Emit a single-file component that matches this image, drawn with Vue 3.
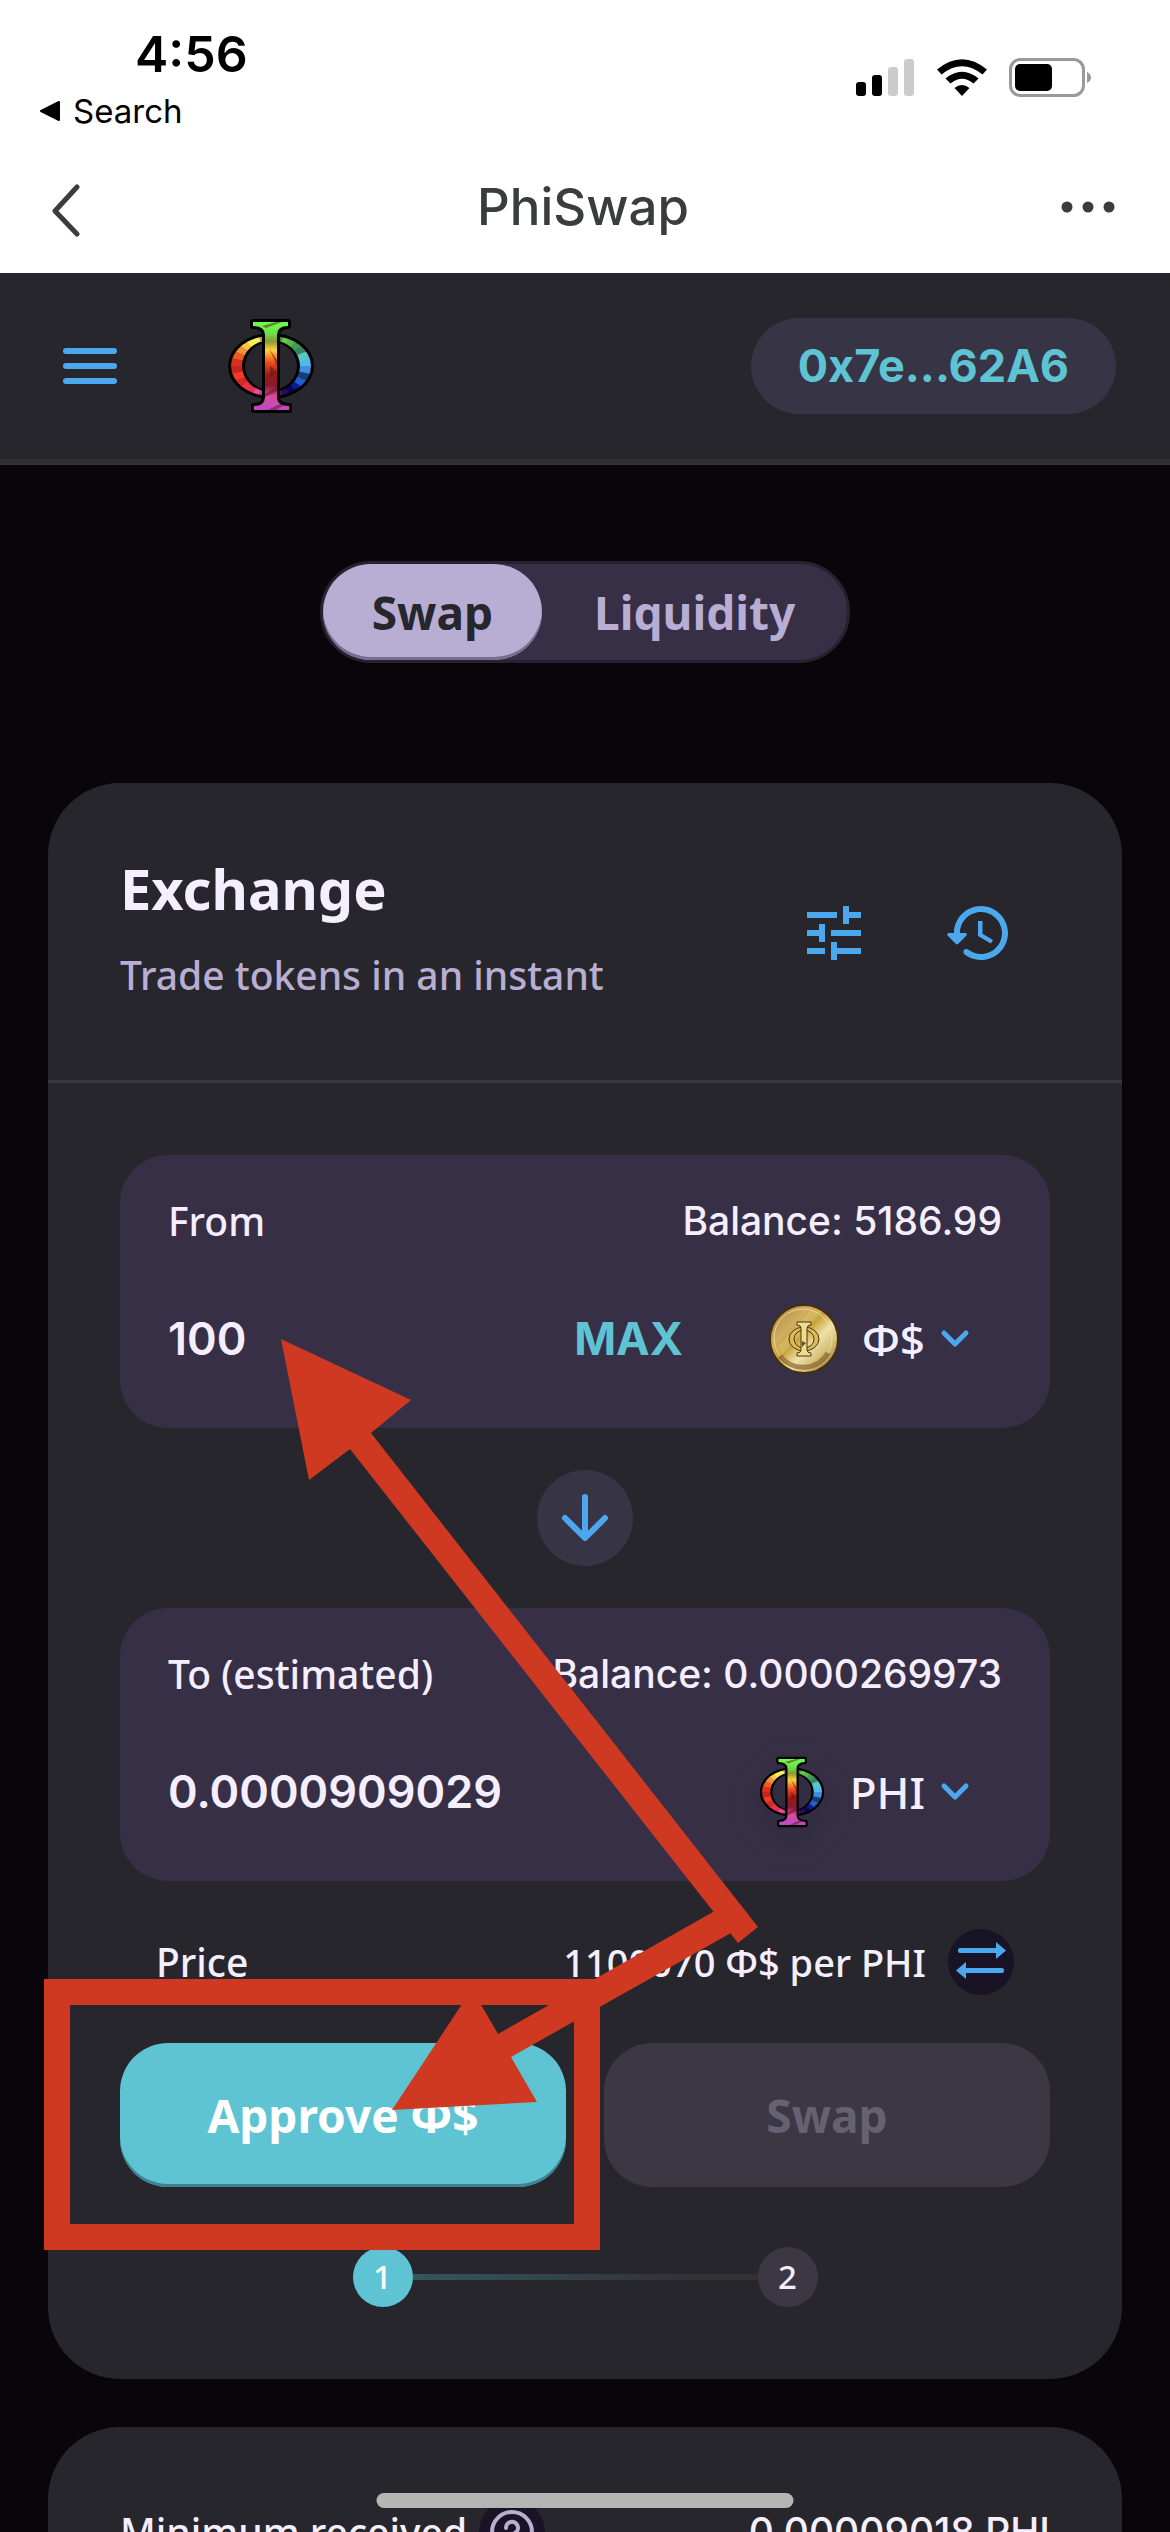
<script setup>
import { ref } from 'vue'

const fromAmount = ref('100')
const toAmount = ref('0.0000909029')

// Rainbow wedges of the Phi ring, clockwise from the top
const ringColors = [
  '#5fb83a', '#3f8f2c', '#6cc94a', '#58b846', '#3c9f54', '#3c7f64', '#58c9c0', '#54b8e8',
  '#3f8fe0', '#163f78', '#1f5fd0', '#0c1c8c', '#07075a', '#2a0a5a', '#4a0f7a', '#8a2a9a',
  '#e65ad0', '#c23a7a', '#f04a9a', '#e0305a', '#f03040', '#d02a2a', '#f23a26', '#c4261e',
  '#d8301e', '#ee5a26', '#f0903a', '#f8c840', '#fff04a', '#f8f060', '#b8963a', '#f0f04a',
]
const step = (Math.PI * 2) / ringColors.length
const wedges = ringColors.map((color, i) => {
  const at = (a) => `${Math.round(43 + 70 * Math.sin(a))},${Math.round(48 - 70 * Math.cos(a))}`
  return { color, points: `43,48 ${at(i * step)} ${at((i + 1) * step + 0.03)}` }
})
</script>

<template>
  <div class="page">
    <svg class="defs" width="0" height="0" aria-hidden="true">
      <defs>
        <linearGradient id="stem" x1="0" y1="0" x2="0" y2="1">
          <stop offset="0" stop-color="#6cff4a" />
          <stop offset="0.13" stop-color="#6ee04a" />
          <stop offset="0.22" stop-color="#8a9a30" />
          <stop offset="0.32" stop-color="#ffd23a" />
          <stop offset="0.46" stop-color="#f04a22" />
          <stop offset="0.6" stop-color="#9a1a16" />
          <stop offset="0.72" stop-color="#8a1830" />
          <stop offset="0.85" stop-color="#dc4aa0" />
          <stop offset="1" stop-color="#b84ac8" />
        </linearGradient>
        <linearGradient id="gold" x1="0" y1="0" x2="1" y2="1">
          <stop offset="0" stop-color="#a87a32" />
          <stop offset="0.3" stop-color="#cfae62" />
          <stop offset="0.46" stop-color="#c8a43c" />
          <stop offset="0.6" stop-color="#f0e2a8" />
          <stop offset="0.75" stop-color="#d4bc74" />
          <stop offset="1" stop-color="#7a5426" />
        </linearGradient>
        <clipPath id="ring">
          <path clip-rule="evenodd" d="M3 48a40 30 0 1 0 80 0a40 30 0 1 0-80 0zM14 48a29 26 0 1 1 58 0a29 26 0 1 1-58 0z" />
        </clipPath>
        <symbol id="phi" viewBox="0 0 86 96">
          <path fill="#000" fill-rule="evenodd" d="M0 48a43 33 0 1 0 86 0a43 33 0 1 0-86 0zM17 48a26 24 0 1 1 52 0a26 24 0 1 1-52 0z" />
          <g clip-path="url(#ring)">
            <polygon v-for="(w, i) in wedges" :key="i" :points="w.points" :fill="w.color" />
          </g>
          <path id="stem-shape" fill="url(#stem)" stroke="#000" stroke-width="6" stroke-linejoin="round" paint-order="stroke"
            d="M25 4H60V8Q49 8 49 17V79Q49 88 61 88V92H26V88Q37 88 37 79V17Q37 8 25 8Z" />
          <path fill="#5a1414" opacity="0.5" d="M41 30l8 12v6zM42 48l7 6-7 6zM37 76l12-8v5l-12 6zM40 92l12-6h6l-10 6zM34 8l14-4h6l-16 6z" />
        </symbol>
      </defs>
    </svg>

    <header class="system">
      <div class="status">
        <div class="clock">
          <span class="time">4:56</span>
          <a class="return" href="#">
            <svg width="22" height="22" viewBox="0 0 22 22"><path d="M2 11 20 2V20Z" stroke="#000" stroke-width="2" stroke-linejoin="round" /></svg>
            Search
          </a>
        </div>
        <svg class="gauges" width="236" height="40" viewBox="0 0 236 40" aria-label="Signal, Wi-Fi and battery">
          <rect x="0" y="24" width="10" height="14" rx="3" />
          <rect x="16" y="17" width="10" height="21" rx="3" />
          <g fill="#cbcbcb">
            <rect x="32" y="9" width="10" height="29" rx="3" />
            <rect x="48" y="1" width="10" height="37" rx="3" />
          </g>
          <path d="M81 11.5Q106-9 131 11.5L126.500 16.500Q106 0 85.500 16.500Z" />
          <path d="M89.500 20.500Q106 7 122.500 20.500L117.500 25.500Q106 16 94.500 25.500Z" />
          <path d="M98.500 30Q106 24 113.500 30L106 38Z" />
          <rect x="154.500" y="1.500" width="73" height="36" rx="10" fill="none" stroke="#999" stroke-width="3" />
          <rect x="159" y="6" width="37" height="27" rx="5" />
          <path fill="#999" d="M231 14Q235 16 235 19.500T231 25Z" />
        </svg>
      </div>
      <div class="titlebar">
        <button class="plain" aria-label="Back">
          <svg width="32" height="60" viewBox="0 0 32 60"><path d="M27 10 5 34 27 57" fill="none" stroke="#3b3c3e" stroke-width="5" stroke-linecap="round" stroke-linejoin="round" /></svg>
        </button>
        <h1>PhiSwap</h1>
        <button class="plain" aria-label="More">
          <svg width="56" height="12" viewBox="0 0 56 12" fill="#3b3c3e"><circle cx="7" cy="6" r="5.500" /><circle cx="28" cy="6" r="5.500" /><circle cx="49" cy="6" r="5.500" /></svg>
        </button>
      </div>
    </header>

    <nav class="appbar">
      <button class="plain" aria-label="Menu">
        <svg width="54" height="36" viewBox="0 0 54 36" fill="#4ca8ee"><rect width="54" height="6" rx="3" /><rect y="15" width="54" height="6" rx="3" /><rect y="30" width="54" height="6" rx="3" /></svg>
      </button>
      <a class="brand" href="#" aria-label="Home"><svg width="86" height="96"><use href="#phi" /></svg></a>
      <button class="account">0x7e...62A6</button>
    </nav>

    <main>
      <div class="tabs">
        <button class="tab active">Swap</button>
        <button class="tab">Liquidity</button>
      </div>

      <section class="card">
        <div class="card-head">
          <div>
            <h2>Exchange</h2>
            <p>Trade tokens in an instant</p>
          </div>
          <div class="tools">
            <button class="plain tool" aria-label="Settings">
              <svg width="72" height="72" viewBox="0 0 24 24" fill="#4ca8ee"><path d="M3 17v2h6v-2H3zM3 5v2h10V5H3zm10 16v-2h8v-2h-8v-2h-2v6h2zM7 9v2H3v2h4v2h2V9H7zm14 4v-2H11v2h10zm-6-4h2V7h4V5h-4V3h-2v6z" /></svg>
            </button>
            <button class="plain tool" aria-label="History">
              <svg width="72" height="72" viewBox="0 0 24 24" fill="#4ca8ee"><path d="M13.260 3C8.170 2.860 4 6.950 4 12H2.210c-.45 0-.67.54-.35.85l2.790 2.800c.2.2.51.2.71 0l2.790-2.800c.31-.31.09-.85-.36-.85H6c0-3.900 3.180-7.050 7.100-7 3.720.05 6.850 3.180 6.900 6.900.05 3.910-3.100 7.100-7 7.100-1.610 0-3.100-.55-4.280-1.480-.4-.31-.96-.28-1.320.08-.42.42-.39 1.130.08 1.490C9 20.290 10.910 21 13 21c5.050 0 9.140-4.170 9-9.260-.13-4.690-4.050-8.610-8.740-8.740zM12 8v5l4.280 2.540.72-1.210-3.500-2.080V8z" /></svg>
            </button>
          </div>
        </div>

        <div class="card-body">
          <div class="panel">
            <div class="row">
              <label for="from">From</label>
              <span class="figure">Balance: 5186.99</span>
            </div>
            <div class="row entry">
              <input id="from" v-model="fromAmount" inputmode="decimal" />
              <button class="plain max">MAX</button>
              <button class="plain token">
                <svg width="72" height="72" viewBox="0 0 72 72">
                  <circle cx="36" cy="36" r="34" fill="url(#gold)" stroke="#44300f" stroke-width="2" />
                  <circle cx="35" cy="35" r="29" fill="none" stroke="#f4e0a0" stroke-width="1" opacity="0.8" />
                  <path d="M12 53A29 29 0 0 0 60 50" fill="none" stroke="#7a5220" stroke-width="5" opacity="0.6" />
                  <path d="M10 44 42 8H54L14 52Z" fill="#f0dc98" opacity="0.25" />
                  <g fill="#d9bb58" stroke="#4a3510" stroke-width="1">
                    <path fill-rule="evenodd" d="M21 36a15 12 0 1 0 30 0a15 12 0 1 0-30 0zM26 36a10 9 0 1 1 20 0a10 9 0 1 1-20 0z" />
                    <path fill="#f0dc90" d="M29 19H43V22Q39 22 39 25V47Q39 50 43 50V53H29V50Q33 50 33 47V25Q33 22 29 22Z" />
                  </g>
                  <path d="M34 38l4 2-4 4z" fill="#6a5020" />
                </svg>
                <span class="symbol">Φ$</span>
                <svg width="30" height="20" viewBox="0 0 30 20"><path d="M4 4 15 15 26 4" fill="none" stroke="#4ca8ee" stroke-width="5" stroke-linecap="round" stroke-linejoin="round" /></svg>
              </button>
            </div>
          </div>

          <button class="flip" aria-label="Switch tokens">
            <svg width="48" height="50" viewBox="0 0 48 50" fill="none" stroke="#4ca8ee" stroke-width="6" stroke-linecap="round" stroke-linejoin="round"><path d="M24 4V44M4 25 24 45 44 25" /></svg>
          </button>

          <div class="panel">
            <div class="row">
              <label for="to">To (estimated)</label>
              <span class="figure">Balance: 0.0000269973</span>
            </div>
            <div class="row entry">
              <input id="to" v-model="toAmount" inputmode="decimal" />
              <button class="plain token">
                <svg class="shade" width="72" height="72"><use href="#phi" /></svg>
                <span class="symbol">PHI</span>
                <svg width="30" height="20" viewBox="0 0 30 20"><path d="M4 4 15 15 26 4" fill="none" stroke="#4ca8ee" stroke-width="5" stroke-linecap="round" stroke-linejoin="round" /></svg>
              </button>
            </div>
          </div>

          <div class="row price">
            <span>Price</span>
            <div class="rate">
              <span class="quote">1100070 Φ$ per PHI</span>
              <button class="round" aria-label="Invert price">
                <svg width="50" height="40" viewBox="0 0 50 40" fill="#4ca8ee"><rect x="2" y="6" width="40" height="5" rx="2" /><path d="M40 0 50 8.500 40 17Z" /><rect x="8" y="26" width="40" height="5" rx="2" /><path d="M10 20 0 28.500 10 37Z" /></svg>
              </button>
            </div>
          </div>

          <div class="actions">
            <button class="approve">Approve Φ$</button>
            <button class="swap" disabled>Swap</button>
          </div>

          <div class="steps">
            <span class="dot done">1</span>
            <span class="line"></span>
            <span class="dot">2</span>
          </div>
        </div>
      </section>

      <section class="card details">
        <div class="row">
          <div class="rate min">
            <span>Minimum received</span>
            <button class="round" aria-label="Help">
              <svg width="44" height="44" viewBox="0 0 44 44" fill="none" stroke="#b8add2" stroke-width="4"><circle cx="22" cy="22" r="20" /><path d="M16 18a6 6 0 1 1 9 5q-3 2-3 5" stroke-linecap="round" /><path d="M22 33v1" stroke-linecap="round" /></svg>
            </button>
          </div>
          <span class="figure">0.00009018 PHI</span>
        </div>
      </section>
    </main>

    <svg class="notes" viewBox="0 0 1170 2532" fill="#cf3921" aria-hidden="true">
      <path d="M281 1339 411 1400 371 1433 758 1927 738 1943 350 1449 309 1480Z" />
      <path d="M392 2110 472 1989 498 2034 720 1908 738 1929 511 2057 537 2102Z" />
      <rect x="57" y="1992" width="530" height="245" fill="none" stroke="#cf3921" stroke-width="26" />
    </svg>
    <div class="home"></div>
  </div>
</template>

<style>
body {
  margin: 0;
  background: #08060b;
}
</style>

<style scoped>
.page {
  position: relative;
  height: 100vh;
  overflow: hidden;
  background: #08060b;
  color: #f4eeff;
  font: 500 39px/60px "Noto Sans", "Open Sans", sans-serif;
}
.defs {
  position: absolute;
}
svg {
  display: block;
  flex: none;
}
h1, h2, p {
  margin: 0;
}
button, input {
  font: inherit;
  color: inherit;
  border: 0;
  padding: 0;
}
.plain {
  background: none;
}
.system {
  background: #fff;
  color: #000;
  font-family: Inter, "Liberation Sans", sans-serif;
}
.status {
  display: flex;
  justify-content: space-between;
  height: 144px;
  padding: 24px 78px 0 39px;
  box-sizing: border-box;
}
.clock {
  display: flex;
  flex-direction: column;
}
.time {
  padding-left: 96px;
  font-size: 50px;
  font-weight: 600;
}
.return {
  display: flex;
  align-items: center;
  gap: 12px;
  font-size: 33px;
  line-height: 54px;
  font-weight: 400;
  color: #000;
  text-decoration: none;
}
.gauges {
  margin-top: 34px;
}
.titlebar {
  display: grid;
  grid-template-columns: 1fr auto 1fr;
  align-items: center;
  height: 129px;
  padding: 0 54px 3px 50px;
  box-sizing: border-box;
}
.titlebar button:first-child {
  justify-self: start;
}
.titlebar button:last-child {
  justify-self: end;
}
h1 {
  font-size: 51px;
  font-weight: 500;
  color: #3b3c3e;
}
.appbar {
  display: flex;
  align-items: center;
  padding: 45px 54px 45px 63px;
  background: #27262c;
  border-bottom: 6px solid #303034;
}
.brand {
  margin-left: 111px;
}
.account, .max, input {
  font-family: Inter, "Noto Sans", sans-serif;
  font-size: 45px;
  font-weight: 700;
}
.tab, .actions button {
  font-size: 46px;
  font-weight: 700;
}
.account {
  height: 96px;
  margin-left: auto;
  padding: 0 47px;
  border-radius: 48px;
  background: #373545;
  color: #5ec4d3;
}
main {
  display: flex;
  flex-direction: column;
  align-items: center;
  padding: 96px 48px 0;
}
.tabs {
  display: flex;
  margin-bottom: 120px;
  border: 3px solid #27222f;
  border-radius: 51px;
  background: #372f45;
}
.tab {
  height: 96px;
  padding: 0 52px;
  border-radius: 48px;
  background: none;
  color: #b8add2;
}
.tab.active {
  padding: 0 49px;
  background: #b8add2;
  color: #27262c;
  box-shadow: inset 0 -3px 0 #766d8f;
}
.card {
  width: 100%;
  border-radius: 72px;
  background: #27262c;
}
.card-head {
  display: flex;
  justify-content: space-between;
  align-items: flex-end;
  padding: 72px 72px 75px;
  border-bottom: 3px solid #383641;
}
h2 {
  margin-bottom: 24px;
  font-size: 56px;
  line-height: 66px;
  font-weight: 700;
}
p {
  color: #b8add2;
}
.tools {
  display: flex;
}
.tool {
  padding: 36px;
}
.card-body {
  display: flex;
  flex-direction: column;
  padding: 72px;
}
.panel {
  padding: 36px 48px 41px;
  border-radius: 48px;
  background: #372f45;
}
.row {
  display: flex;
  align-items: center;
  justify-content: space-between;
}
.figure {
  font-family: Inter, "Noto Sans", sans-serif;
}
.quote {
  font-size: 38px;
}
.entry {
  height: 96px;
  margin-top: 40px;
}
input {
  flex: 1;
  min-width: 0;
  background: none;
  font-weight: 600;
}
.max {
  margin-right: 85px;
  color: #5ec4d3;
}
.token {
  display: flex;
  align-items: center;
  padding-right: 32px;
  font-size: 44px;
}
.symbol {
  margin: 0 15px 0 22px;
}
.shade {
  filter: drop-shadow(0 12px 12px #302c40);
}
.flip {
  display: grid;
  place-items: center;
  width: 96px;
  height: 96px;
  margin: 42px auto;
  border-radius: 50%;
  background: #373545;
}
.price {
  margin: 48px 0;
  padding: 0 36px;
}
.rate {
  display: flex;
  align-items: center;
  gap: 22px;
}
.min {
  gap: 12px;
}
.round {
  display: grid;
  place-items: center;
  width: 66px;
  height: 66px;
  border-radius: 50%;
  background: #191326;
}
.actions {
  display: grid;
  grid-template-columns: 1fr 1fr;
  gap: 38px;
}
.actions button {
  height: 144px;
  border-radius: 48px;
}
.approve {
  background: #5ec4d3;
  color: #fff;
  box-shadow: inset 0 -3px 0 #3e8193;
}
.swap {
  background: #3c3742;
  color: #666171;
}
.steps {
  display: flex;
  align-items: center;
  width: 50%;
  margin: 60px auto 0;
}
.dot {
  width: 60px;
  border-radius: 50%;
  background: #3c3742;
  text-align: center;
  font-size: 33px;
}
.dot.done {
  background: #5ec4d3;
  color: #fff;
}
.line {
  flex: 1;
  height: 6px;
  background: linear-gradient(90deg, #33565f, #333036 80%);
}
.details {
  margin-top: 48px;
  padding: 72px;
  box-sizing: border-box;
}
.notes {
  position: absolute;
  top: 0;
  left: 0;
  width: 100%;
}
.home {
  position: absolute;
  bottom: 24px;
  left: 50%;
  width: 417px;
  height: 15px;
  border-radius: 8px;
  background: #b5b5b5;
  transform: translateX(-50%);
}
</style>
